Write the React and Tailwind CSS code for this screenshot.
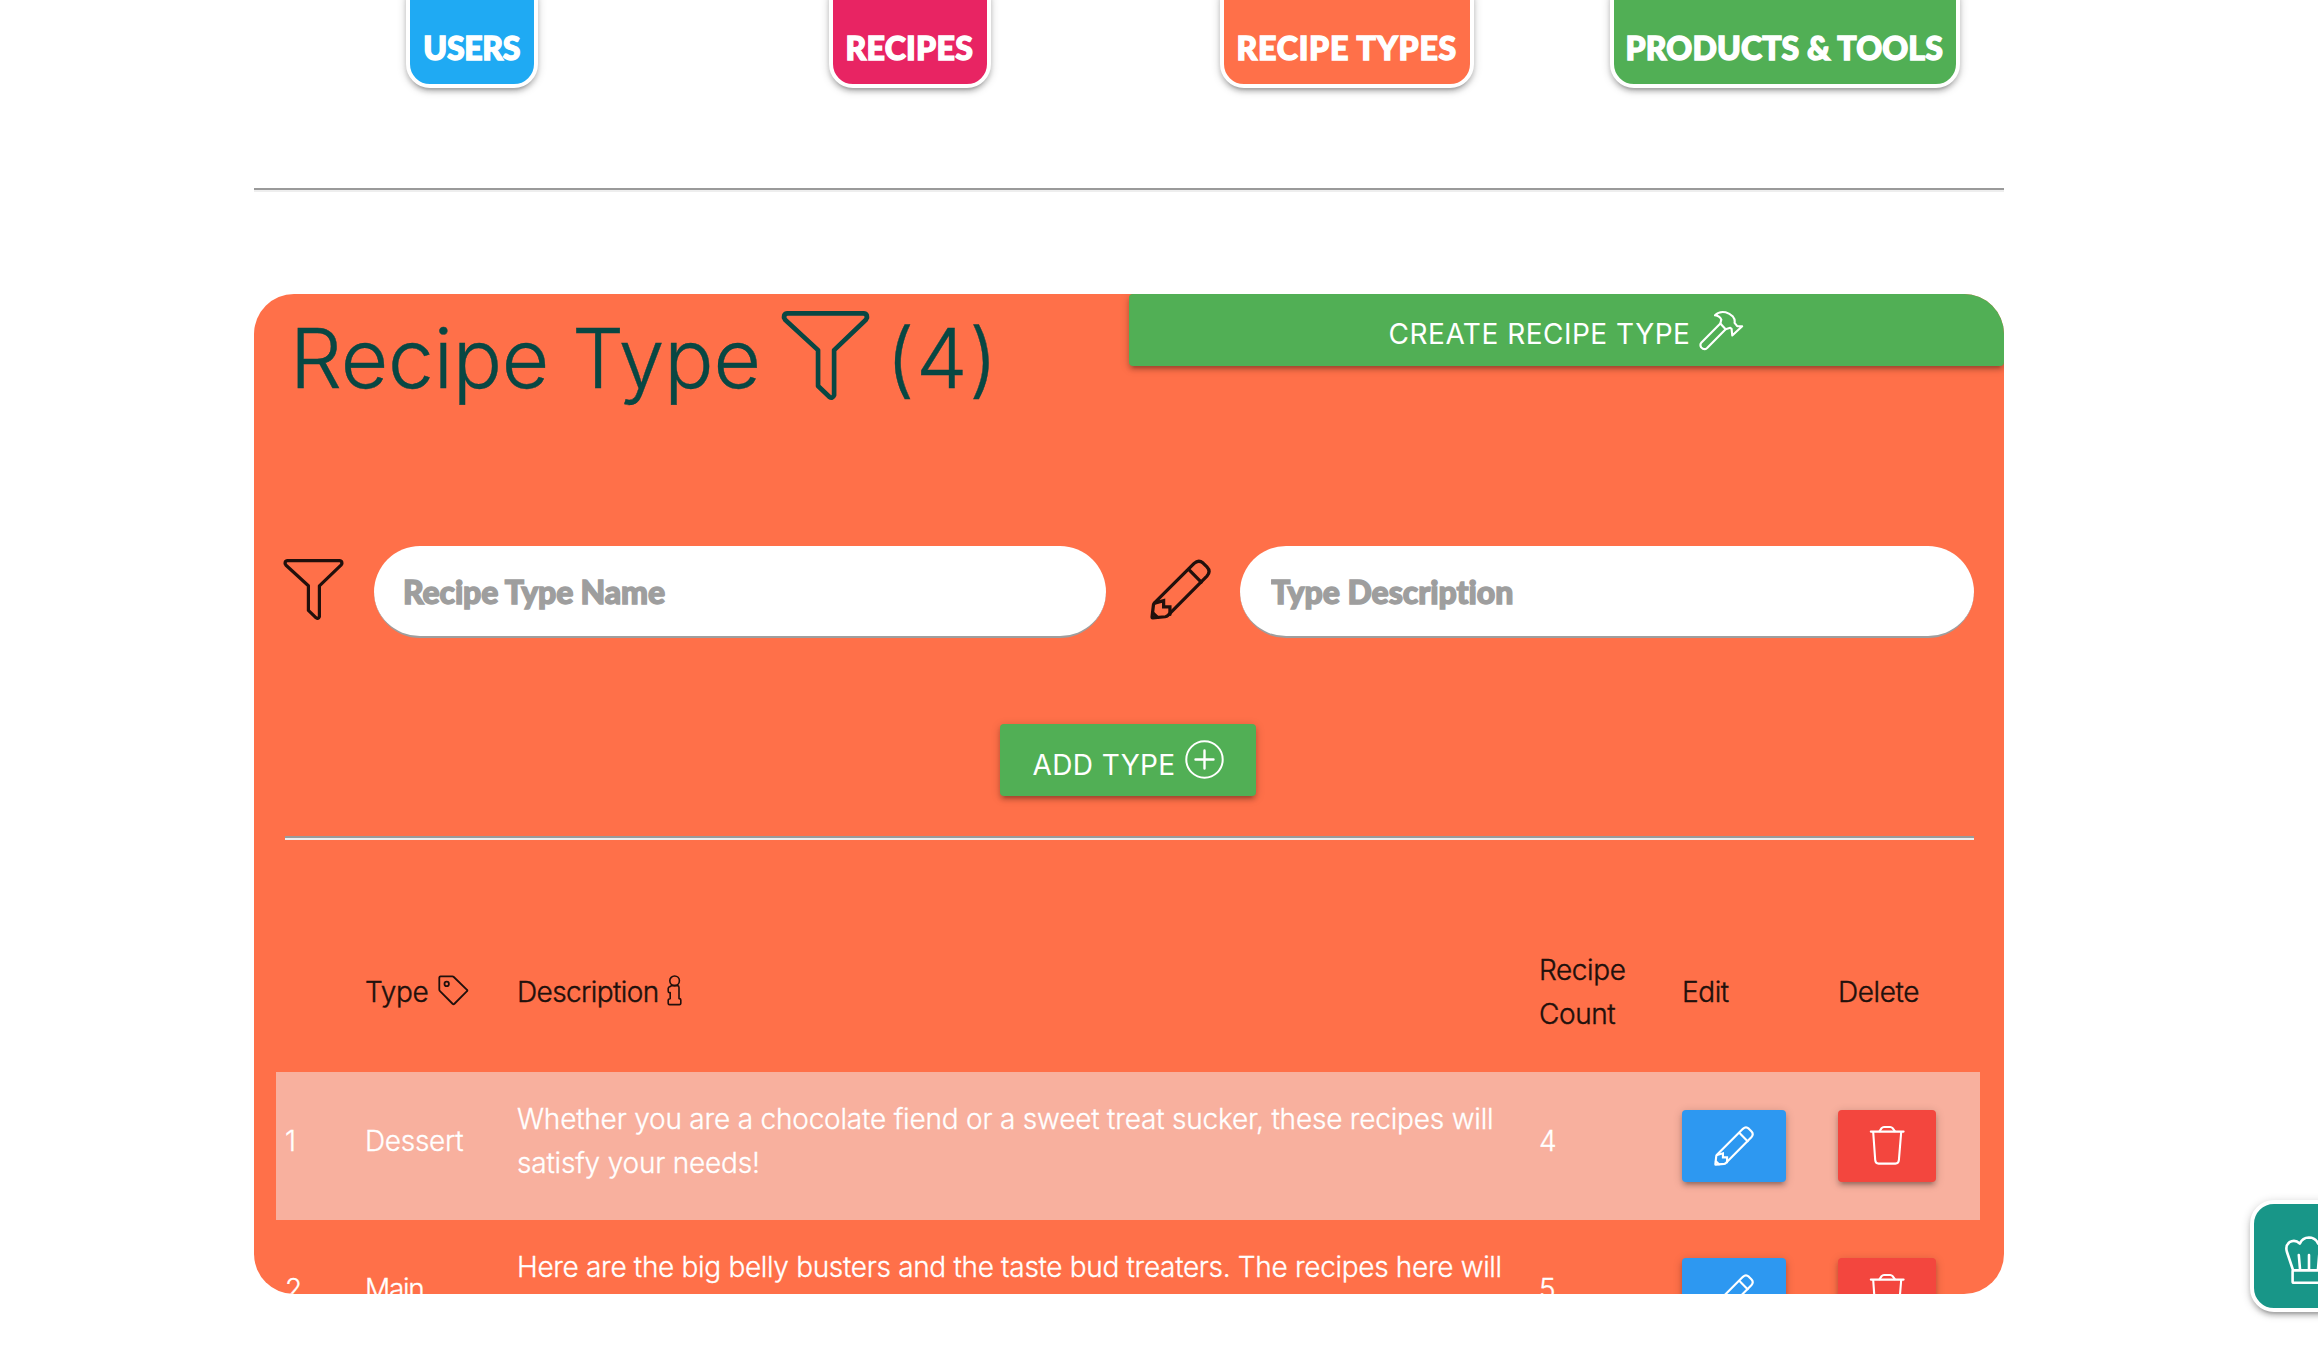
const materialShadow =
  "shadow-[0_4px_4px_rgba(0,0,0,0.14),0_6px_2px_-4px_rgba(0,0,0,0.12),0_2px_10px_rgba(0,0,0,0.2)]";

function Svg({ w, h, box, sw, children, className = "" }) {
  return (
    <svg
      width={w}
      height={h}
      viewBox={box}
      fill="none"
      stroke="currentColor"
      strokeWidth={sw}
      strokeLinecap="round"
      strokeLinejoin="round"
      className={`shrink-0 ${className}`}
    >
      {children}
    </svg>
  );
}

function FunnelIcon({ w, h, className }) {
  return (
    <Svg w={w} h={h} box="0 0 60 61" sw={3.2} className={className}>
      <path d="M3.8 1.6H56.2Q58.6 1.9 58.4 4.6L57.5 6.2L35.9 26.8V57.6Q34.8 60.4 32.6 58.8L24.9 51.4V26.8L2.5 6.2L1.6 4.6Q1.4 1.9 3.8 1.6Z" />
    </Svg>
  );
}

function PencilIcon({ size, sw = 3.2, className }) {
  return (
    <Svg w={size} h={size} box="0 0 60 60" sw={sw} className={className}>
      <path d="M4.4 43.2L43.4 4.3Q47.8 0.2 52.2 4L56 7.8Q60.2 12.2 56 16.8L17.4 55.8Q16.6 56.6 15 56.8L2.6 57.9Q2 57.9 2 57.2L3.4 45Q3.6 44 4.4 43.2Z" />
      <path d="M39 11.2L50.4 22.8" />
      <path d="M4.6 43.4L13.4 41V47H19.6V54.5" strokeLinejoin="miter" />
      <path d="M2.8 53L7.5 57.4" />
    </Svg>
  );
}

function TrashIcon() {
  return (
    <Svg w={36} h={40} box="0 0 36 40" sw={2.1}>
      <path d="M1.8 6.6H34.6" />
      <path d="M10.6 6.2L12.6 3.2Q13.6 2 15 2H21.2Q22.6 2 23.6 3.2L25.8 6.2" />
      <path d="M4.2 7L6.2 35Q6.5 38.6 9.6 38.6H26.4Q29.6 38.6 29.9 35L32.2 7" />
    </Svg>
  );
}

function HammerIcon({ className }) {
  return (
    <Svg w={45} h={41} box="24 26 135 124" sw={6.4} className={className}>
      <path d="M88 67L31 124Q25 131 30 139Q39 149 48 141L104 84" />
      <path d="M72 42Q84 29 104 33Q116 36 126 46Q133 54 131 65L139 75L154 75L124 103L122 83L118 80L104 84L88 67L91 55Q86 44 72 42Z" />
    </Svg>
  );
}

function TagIcon({ className }) {
  return (
    <Svg w={31} h={31} box="0 0 31 31" sw={1.8} className={className}>
      <path d="M2.6 1.4H14.4Q15.2 1.4 15.8 2L29 14.8Q29.8 15.5 29 16.2L16.2 29Q15.5 29.8 14.8 29L2 16.2Q1.3 15.5 1.3 14.6V2.6Q1.4 1.5 2.6 1.4Z" />
      <circle cx="8.7" cy="8.9" r="2.2" />
    </Svg>
  );
}

function InfoIcon({ className }) {
  return (
    <Svg w={15} h={31} box="0 0 15 31" sw={1.6} className={className}>
      <circle cx="7.6" cy="5.8" r="4.8" />
      <path d="M4.4 10.6H10.4Q12 10.8 12 12.4V23.6H12.6Q13.8 23.8 13.8 25V28.4Q13.7 29.6 12.5 29.6H2.5Q1.3 29.6 1.2 28.4V25Q1.2 23.8 3.2 23.6V17.6H2.4Q1.2 17.4 1.2 16.2V13.4Q1.2 12.2 3.2 11.6Z" />
    </Svg>
  );
}

function PlusCircleIcon({ className }) {
  return (
    <Svg w={39} h={39} box="0 0 39 39" sw={2} className={className}>
      <circle cx="19.5" cy="19.5" r="18.2" />
      <path d="M10.5 19.5H28.5M19.5 10.5V28.5" strokeWidth="2.4" />
    </Svg>
  );
}

function ChefHatIcon() {
  return (
    <Svg w={48} h={49} box="0 0 48 49" sw={2.6}>
      <path d="M8 34L1.8 15.5Q0.2 9.5 4.4 6.2Q10 2.8 14.8 7.6Q17.5 1.6 24 1.5Q30.5 1.6 33.2 7.6Q38 2.8 43.6 6.2Q47.8 9.5 46.2 15.5L40 34" />
      <path d="M8.8 34.4H39.2Q40.4 34.4 40.4 35.6V45.4Q40.4 46.8 39.2 46.8H8.8Q7.6 46.8 7.6 45.4V35.6Q7.6 34.4 8.8 34.4Z" />
      <path d="M13.8 19L15 33M24 19V33M34.2 19L33 33" />
    </Svg>
  );
}

const tabs = [
  { label: "USERS", box: "w-[132px] bg-[#1faaf3]", text: "tracking-[-0.3px]" },
  { label: "RECIPES", box: "w-[162px] bg-[#e82463]", text: "tracking-[0.3px]" },
  { label: "RECIPE TYPES", box: "w-[254px] bg-[#ff7049]", text: "tracking-[0.8px]" },
  { label: "PRODUCTS & TOOLS", box: "w-[350px] bg-[#51af55]", text: "tracking-[0.15px]" },
];

const rows = [
  {
    id: 1,
    type: "Dessert",
    description: [
      "Whether you are a chocolate fiend or a sweet treat sucker, these recipes will",
      "satisfy your needs!",
    ],
    count: 4,
    bg: "bg-[#f8b09e]",
    tracking: "tracking-[-0.2px]",
    typeTracking: "tracking-[-0.3px]",
  },
  {
    id: 2,
    type: "Main",
    description: [
      "Here are the big belly busters and the taste bud treaters. The recipes here will",
    ],
    count: 5,
    bg: "",
    tracking: "tracking-[-0.32px]",
    typeTracking: "tracking-[-1.3px]",
  },
];

const columns = "grid grid-cols-[89px_152px_1022px_143px_156px_142px]";

function Rule({ className }) {
  return (
    <div className={className}>
      <div className="h-[2px] bg-[#9a9a9a]" />
      <div className="h-[2px] bg-[#eeeeee]" />
    </div>
  );
}

function Field({ placeholder, className }) {
  return (
    <input
      placeholder={placeholder}
      className={`h-[92px] rounded-[46px] border-b-2 border-[#9e9e9e] bg-white font-['Lato',sans-serif] text-[32px] font-black outline-none placeholder:text-[#9e9e9e] placeholder:opacity-100 placeholder:[-webkit-text-stroke:1.4px_#9e9e9e] ${className}`}
    />
  );
}

export default function App() {
  return (
    <div className="relative flow-root h-screen w-full overflow-hidden bg-white font-['Inter',sans-serif] text-[28px] font-light leading-[44px] text-[#21100c]">
      <div className="ml-[254px] w-[1750px]">
        <nav className="-mt-6 grid h-[112px] grid-cols-4 justify-items-center">
          {tabs.map((t) => (
            <div
              key={t.label}
              className={`-ml-px flex h-[112px] items-end justify-center rounded-3xl border-4 border-white pb-4 ${materialShadow} ${t.box}`}
            >
              <span
                className={`-ml-px whitespace-nowrap font-['Lato',sans-serif] text-[32px] font-black leading-10 text-white [-webkit-text-stroke:1.4px_white] ${t.text}`}
              >
                {t.label}
              </span>
            </div>
          ))}
        </nav>

        <Rule className="mt-[100px]" />

        <section className="mt-[102px] h-[1000px] overflow-hidden rounded-[40px] bg-[#ff7049]">
          <header className="flex h-[252px] items-start">
            <h1 className="flex w-[875px] pl-9 pt-[15px] text-[82px] font-light leading-[100px] text-[#084743] [-webkit-text-stroke:0.4px_#084743]">
              <span className="w-[491px] whitespace-nowrap tracking-[-0.2px]">Recipe Type</span>
              <FunnelIcon w={89} h={89} className="mt-[2px]" />
              <span className="ml-4 tracking-[1.5px]">(4)</span>
            </h1>
            <button
              className={`flex h-[72px] w-[875px] justify-center rounded bg-[#51af55] pt-[17px] text-[28px] font-normal tracking-[0.5px] text-white ${materialShadow}`}
            >
              <span className="leading-[46px]">CREATE RECIPE TYPE</span>
              <HammerIcon className="-mt-px ml-[9px]" />
            </button>
          </header>

          <div className="flex items-start">
            <FunnelIcon w={61} h={61} className="ml-[29px] mt-[13px]" />
            <Field placeholder="Recipe Type Name" className="ml-[30px] w-[732px] pl-[29px] tracking-[-0.15px]" />
            <PencilIcon size={61} className="ml-11 mt-[13px]" />
            <Field placeholder="Type Description" className="ml-[29px] w-[734px] pl-[31px] tracking-[-0.05px]" />
          </div>

          <div className="mt-[86px] flex justify-center">
            <button
              className={`mr-[2px] flex h-[72px] w-[256px] justify-center rounded bg-[#51af55] pt-4 text-[28px] font-normal tracking-[0.4px] text-white ${materialShadow}`}
            >
              <span className="leading-[50px]">ADD TYPE</span>
              <PlusCircleIcon className="ml-[9px]" />
            </button>
          </div>

          <Rule className="ml-[31px] mr-[30px] mt-10" />

          <div className="mx-auto mt-[86px] w-[1704px] -translate-x-px">
            <div className={`${columns} h-[146px] items-center pb-[14px] tracking-[-0.4px] [-webkit-text-stroke:0.4px_#21100c]`}>
              <div />
              <div className="flex">
                <span className="w-[73px] tracking-[-0.3px]">Type</span>
                <TagIcon className="mt-[5px]" />
              </div>
              <div className="flex">
                <span className="w-[150px] tracking-[-0.6px]">Description</span>
                <InfoIcon className="mt-[5px]" />
              </div>
              <div className="pr-8">Recipe Count</div>
              <div>Edit</div>
              <div>Delete</div>
            </div>
            {rows.map((r) => (
              <div
                key={r.id}
                className={`${columns} h-[148px] items-center text-white [-webkit-text-stroke:0.3px_white] ${r.bg}`}
              >
                <div className="pb-[11px] pl-[9px]">{r.id}</div>
                <div className={`pb-[11px] ${r.typeTracking}`}>{r.type}</div>
                <div className={`h-[99px] whitespace-nowrap ${r.tracking}`}>
                  {r.description.map((line) => (
                    <div key={line}>{line}</div>
                  ))}
                </div>
                <div className="pb-[11px]">{r.count}</div>
                <button
                  className={`flex h-[72px] w-[104px] items-start justify-center rounded bg-[#2d98f1] pt-4 ${materialShadow}`}
                >
                  <PencilIcon size={40} className="-ml-px" />
                </button>
                <button
                  className={`flex h-[72px] w-[98px] items-start justify-center rounded bg-[#f3463e] pt-[15px] ${materialShadow}`}
                >
                  <TrashIcon />
                </button>
              </div>
            ))}
          </div>
        </section>
      </div>

      <button
        className={`absolute left-[2250px] top-[1200px] flex h-[112px] w-[118px] items-center justify-center rounded-3xl border-4 border-white bg-[#189688] text-white ${materialShadow}`}
      >
        <span className="mt-2">
          <ChefHatIcon />
        </span>
      </button>
    </div>
  );
}
